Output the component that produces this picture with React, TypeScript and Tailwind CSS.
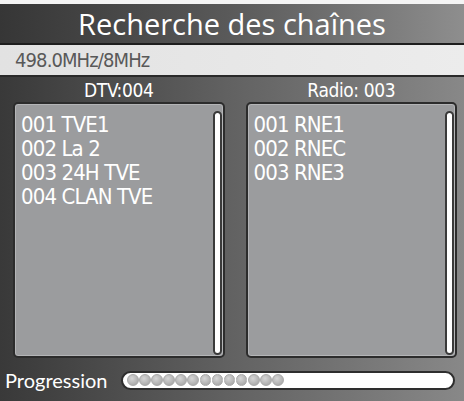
import React from 'react';

const dtv = ['001 TVE1', '002 La 2', '003 24H TVE', '004 CLAN TVE'];
const radio = ['001 RNE1', '002 RNEC', '003 RNE3'];

const narrow = { fontFamily: '"Liberation Sans Narrow", "DejaVu Sans Condensed", sans-serif' };

const ChannelPanel: React.FC<{ items: string[] }> = ({ items }) => (
  <div className="flex h-[256px] flex-1 rounded-[5px] border-2 border-[#2c2c2c] bg-[#9b9c9e] shadow-[inset_0_0_0_1px_#b4b5b7]">
    <ul className="flex-1 pl-[6px] pt-[9px] text-[22px] leading-[24px] tracking-[-0.9px] text-white" style={narrow}>
      {items.map((c) => (
        <li key={c}>{c}</li>
      ))}
    </ul>
    <div className="mb-[1px] mr-[1px] mt-[7px] w-[9px] rounded-full border-2 border-[#3a3a3a] bg-white" />
  </div>
);

export default function App() {
  return (
    <div className="flex h-[401px] w-[464px] flex-col overflow-hidden bg-white">
      <div className="h-[4px] bg-[#f4f4f4]" />
      <div
        className="flex h-[41px] items-center justify-center border-b-2 border-[#1e1e1e] bg-gradient-to-r from-[#363636] via-[#5a5a5a] to-[#8e8e8e] text-[29px] text-white"
        style={{ fontFamily: '"Open Sans", sans-serif' }}
      >
        Recherche des chaînes
      </div>
      <div
        className="flex h-[32px] items-center border-b-2 border-[#2a2a2a] bg-gradient-to-r from-[#e2e2e2] to-[#ececec] pl-[15px] text-[20px] tracking-[-0.9px] text-[#595959]"
        style={narrow}
      >
        498.0MHz/8MHz
      </div>
      <div className="flex flex-1 flex-col bg-gradient-to-r from-[#393939] via-[#626262] to-[#888888]">
        <div
          className="flex h-[24px] items-end gap-[21px] pl-[13px] pr-[7px] text-[19px] leading-[22px] tracking-[-0.4px] text-white"
          style={narrow}
        >
          <div className="flex-1 text-center">DTV:004</div>
          <div className="flex-1 text-center">Radio: 003</div>
        </div>
        <div className="flex gap-[21px] pl-[13px] pr-[7px] pt-[1px]">
          <ChannelPanel items={dtv} />
          <ChannelPanel items={radio} />
        </div>
        <div className="mt-[11px] flex items-center pl-[5px] pr-[9px]">
          <span className="w-[116px] text-[20px] leading-[22px] text-white" style={{ fontFamily: 'Lato, sans-serif' }}>
            Progression
          </span>
          <div className="flex h-[19px] flex-1 items-center gap-[0.5px] rounded-full border-2 border-[#2e2e2e] bg-white px-[4px]">
            {Array.from({ length: 13 }).map((_, i) => (
              <span
                key={i}
                className="h-[12px] w-[11.6px] rounded-full border border-[#a9a9a9] bg-[radial-gradient(circle_at_40%_35%,#d6d6d6,#9e9e9e)]"
              />
            ))}
          </div>
        </div>
      </div>
    </div>
  );
}
